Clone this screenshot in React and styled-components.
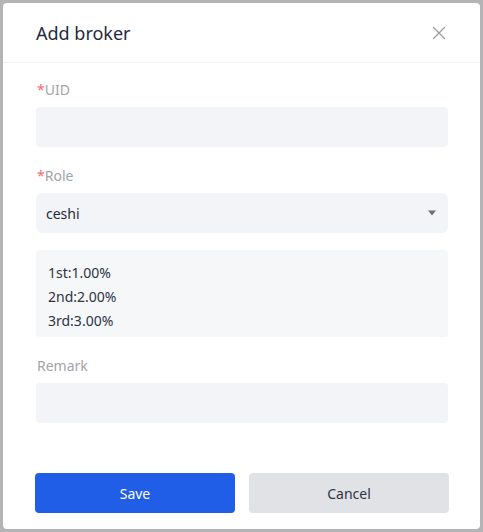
import React from "react";
import styled, { createGlobalStyle } from "styled-components";

const GlobalStyle = createGlobalStyle`
  html, body {
    margin: 0;
    padding: 0;
    background: #b4b4b6;
  }
  body {
    font-family: "Noto Sans", "Open Sans", sans-serif;
  }
  * { box-sizing: border-box; }
`;

function CloseIcon() {
  return (
    <svg width="14" height="14" viewBox="0 0 14 14" fill="none">
      <path d="M1.5 1.5 L12.5 12.5 M12.5 1.5 L1.5 12.5" stroke="#9a9ca2" strokeWidth="1.3" strokeLinecap="round" />
    </svg>
  );
}

function Caret() {
  return (
    <svg width="10" height="6" viewBox="0 0 10 6">
      <path d="M1 0.5 H9 L5 5.5 Z" fill="#6b7180" />
    </svg>
  );
}

function Field({ label, required, spaced, children }) {
  return (
    <FieldWrap $spaced={spaced}>
      <Label>
        {required && <Star>*</Star>}
        {label}
      </Label>
      {children}
    </FieldWrap>
  );
}

export default function App() {
  return (
    <>
      <GlobalStyle />
      <Page>
        <Modal>
          <Header>
            <Title>Add broker</Title>
            <CloseButton aria-label="close">
              <CloseIcon />
            </CloseButton>
          </Header>
          <Body>
            <Field label="UID" required>
              <Input />
            </Field>
            <Field label="Role" required spaced>
              <Select>
                <span>ceshi</span>
                <Caret />
              </Select>
            </Field>
            <RateBox>
              <div>1st:1.00%</div>
              <div>2nd:2.00%</div>
              <div>3rd:3.00%</div>
            </RateBox>
            <Field label="Remark" spaced>
              <Input />
            </Field>
          </Body>
          <Footer>
            <Button $primary>Save</Button>
            <Button>Cancel</Button>
          </Footer>
        </Modal>
      </Page>
    </>
  );
}

const Page = styled.div`
  padding: 3px;
  height: 532px;
`;

const Modal = styled.div`
  background: #fff;
  border-radius: 4px;
  width: 477px;
  height: 526px;
  display: flex;
  flex-direction: column;
`;

const Header = styled.div`
  height: 60px;
  padding: 0 34px 0 33px;
  display: flex;
  align-items: center;
  justify-content: space-between;
  border-bottom: 1px solid #eff0f2;
`;

const Title = styled.h2`
  margin: 0;
  font-size: 18px;
  font-weight: 400;
  color: #1f2a3c;
`;

const CloseButton = styled.button`
  border: 0;
  background: none;
  padding: 0;
  display: flex;
  cursor: pointer;
`;

const Body = styled.div`
  padding: 17px 32px 0 33px;
  display: flex;
  flex-direction: column;
  gap: 17px;
`;

const FieldWrap = styled.div`
  display: flex;
  flex-direction: column;
  gap: 7px;
  margin-top: ${(p) => (p.$spaced ? "2px" : "0")};
`;

const Label = styled.div`
  font-size: 14px;
  line-height: 20px;
  color: #a2a4a8;
  padding-left: 1px;
`;

const Star = styled.span`
  color: #f56c6c;
`;

const Input = styled.div`
  height: 40px;
  background: #f3f4f7;
  border-radius: 4px;
`;

const Select = styled.div`
  height: 40px;
  background: #f3f4f7;
  border-radius: 6px;
  padding: 0 11px 0 10px;
  display: flex;
  align-items: center;
  justify-content: space-between;
  font-size: 14px;
  color: #1f2a3c;
`;

const RateBox = styled.div`
  height: 87px;
  background: #f6f7f9;
  border-radius: 4px;
  padding: 11px 12px;
  font-size: 14px;
  line-height: 24px;
  color: #2c3445;
`;

const Footer = styled.div`
  margin-top: auto;
  padding: 0 31px 16px 32px;
  display: flex;
  gap: 14px;
`;

const Button = styled.button`
  flex: 1;
  height: 40px;
  border: 0;
  border-radius: 4px;
  font-family: inherit;
  font-size: 14px;
  background: ${(p) => (p.$primary ? "#205ee8" : "#e1e2e6")};
  color: ${(p) => (p.$primary ? "#fff" : "#2c3445")};
  cursor: pointer;
`;
